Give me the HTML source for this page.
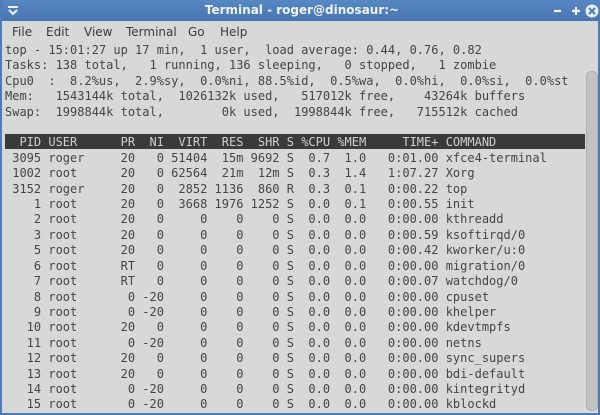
<!DOCTYPE html>
<html><head><meta charset="utf-8"><style>
html,body{margin:0;padding:0;width:600px;height:415px;overflow:hidden;background:#d8d8d8}
.win{position:absolute;left:0;top:0;width:600px;height:415px;background:#d8d8d8;box-sizing:border-box;border:2px solid #4b7cb8;border-top:none}
.title{position:absolute;left:0;top:0;width:600px;height:21px;background:linear-gradient(#5888c4,#4675b2);color:#eef3fa;font:bold 12px "DejaVu Sans","Liberation Sans",sans-serif;text-align:center;line-height:21px}
.menu{position:absolute;left:0;top:21px;width:600px;height:22px;font:12px "DejaVu Sans","Liberation Sans",sans-serif;color:#3a3a3a;line-height:22px}
.menu span{position:absolute;top:0}
pre{position:absolute;left:3px;top:43px;margin:0;font:12px "DejaVu Sans Mono","Liberation Mono",monospace;line-height:15.4px;color:#454545;white-space:pre}
.hdr{position:absolute;left:3px;top:134px;width:580px;height:15px;background:#3a3a3a}
.hl{color:#d0d0d0}
.sb{position:absolute;left:584px;top:71px;width:10px;height:338px;background:#c2c2c2;border:1px solid #b0b0b0;border-radius:5px}
</style></head><body>
<div class="win">
<div class="title">Terminal - roger@dinosaur:~</div>
<svg style="position:absolute;left:5px;top:5px" width="12" height="11"><path d="M1 2h10M2 5l4 4 4-4" stroke="#eef3fa" stroke-width="2" fill="none"/></svg>
<svg style="position:absolute;left:550px;top:3px" width="48" height="16"><path d="M2 8h7M20 8h8M24 4v8" stroke="#eef3fa" stroke-width="2.2"/><circle cx="40" cy="8" r="6.5" fill="#e8eef6"/><path d="M37 5l6 6M43 5l-6 6" stroke="#4b7cb8" stroke-width="2"/></svg>
<div class="menu"><span style="left:10px">File</span><span style="left:44px">Edit</span><span style="left:82px">View</span><span style="left:124px">Terminal</span><span style="left:186px">Go</span><span style="left:218px">Help</span></div>
<div class="hdr"></div>
<div class="sb"></div>
<pre>top - 15:01:27 up 17 min,  1 user,  load average: 0.44, 0.76, 0.82
Tasks: 138 total,   1 running, 136 sleeping,   0 stopped,   1 zombie
Cpu0  :  8.2%us,  2.9%sy,  0.0%ni, 88.5%id,  0.5%wa,  0.0%hi,  0.0%si,  0.0%st
Mem:   1543144k total,  1026132k used,   517012k free,    43264k buffers
Swap:  1998844k total,        0k used,  1998844k free,   715512k cached

<span class="hl">  PID USER      PR  NI  VIRT  RES  SHR S %CPU %MEM     TIME+ COMMAND</span>
 3095 roger     20   0 51404  15m 9692 S  0.7  1.0   0:01.00 xfce4-terminal
 1002 root      20   0 62564  21m  12m S  0.3  1.4   1:07.27 Xorg
 3152 roger     20   0  2852 1136  860 R  0.3  0.1   0:00.22 top
    1 root      20   0  3668 1976 1252 S  0.0  0.1   0:00.55 init
    2 root      20   0     0    0    0 S  0.0  0.0   0:00.00 kthreadd
    3 root      20   0     0    0    0 S  0.0  0.0   0:00.59 ksoftirqd/0
    5 root      20   0     0    0    0 S  0.0  0.0   0:00.42 kworker/u:0
    6 root      RT   0     0    0    0 S  0.0  0.0   0:00.00 migration/0
    7 root      RT   0     0    0    0 S  0.0  0.0   0:00.07 watchdog/0
    8 root       0 -20     0    0    0 S  0.0  0.0   0:00.00 cpuset
    9 root       0 -20     0    0    0 S  0.0  0.0   0:00.00 khelper
   10 root      20   0     0    0    0 S  0.0  0.0   0:00.00 kdevtmpfs
   11 root       0 -20     0    0    0 S  0.0  0.0   0:00.00 netns
   12 root      20   0     0    0    0 S  0.0  0.0   0:00.00 sync_supers
   13 root      20   0     0    0    0 S  0.0  0.0   0:00.00 bdi-default
   14 root       0 -20     0    0    0 S  0.0  0.0   0:00.00 kintegrityd
   15 root       0 -20     0    0    0 S  0.0  0.0   0:00.00 kblockd</pre>
</div>
</body></html>
